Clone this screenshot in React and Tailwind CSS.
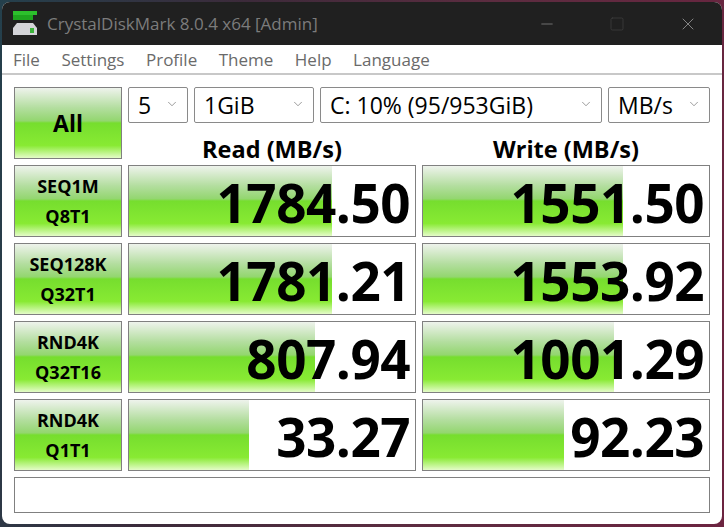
import { Minus, Square, X, ChevronDown } from 'lucide-react';

const rows = [
  { top: 'SEQ1M', bottom: 'Q8T1', read: '1784.50', readBar: 203, write: '1551.50', writeBar: 200 },
  { top: 'SEQ128K', bottom: 'Q32T1', read: '1781.21', readBar: 203, write: '1553.92', writeBar: 200 },
  { top: 'RND4K', bottom: 'Q32T16', read: '807.94', readBar: 186, write: '1001.29', writeBar: 191 },
  { top: 'RND4K', bottom: 'Q1T1', read: '33.27', readBar: 120, write: '92.23', writeBar: 141 },
];

const barGradient = 'bg-[linear-gradient(180deg,#eef3ec_0%,#b4dea0_28%,#93d66f_47%,#76de2e_50%,#88ea33_82%,#e4fcc8_100%)]';
const menus = ['File', 'Settings', 'Profile', 'Theme', 'Help', 'Language'];

function Combo({ label, className }) {
  return (
    <div className={`h-9 flex items-center justify-between pl-[9px] pr-[8px] bg-white border border-[#8a8a8a] rounded-[2px] text-[23px] text-black ${className}`}>
      <span>{label}</span>
      <ChevronDown size={14} strokeWidth={1} className="text-[#555] -mt-[2px]" />
    </div>
  );
}

function Score({ value, bar }) {
  return (
    <div className="relative flex-1 h-full bg-white border border-[#808080] overflow-hidden">
      <div className={`absolute left-0 top-0 bottom-0 ${barGradient}`} style={{ width: bar }} />
      <div className="relative h-full flex items-center justify-end pr-[5px] pt-[3px] text-[53px] leading-[60px] font-bold text-black tracking-[-0.5px]">{value}</div>
    </div>
  );
}

function TestButton({ top, bottom }) {
  return (
    <div className={`w-[108px] h-full shrink-0 flex flex-col items-center justify-center gap-[6px] border border-[#808080] text-[18px] leading-6 font-bold text-black ${barGradient}`}>
      <span>{top}</span>
      <span>{bottom}</span>
    </div>
  );
}

export default function App() {
  return (
    <div className="w-[724px] h-[527px] p-[2px] pb-[3px] overflow-hidden bg-[linear-gradient(100deg,#24404c_0%,#3c2a3a_30%,#5c2c40_60%,#6c2440_100%)] font-['Open_Sans','Noto_Sans',sans-serif]">
      <div className="h-full flex flex-col rounded-[8px] overflow-hidden bg-white">
        {/* title bar */}
        <div className="h-[43px] shrink-0 flex items-center bg-[#202020] text-[#7c7c7c]">
          <svg width="24" height="24" viewBox="0 0 24 24" className="ml-[11px] mr-[10px] -mt-[1px]">
            <rect x="0" y="0" width="24" height="4" fill="#2cc02c" />
            <rect x="0" y="4" width="20" height="5" fill="#1ea51e" />
            <path d="M4 12h16l4 5v7H0v-7z" fill="#d4d4d8" />
            <rect x="17" y="17" width="4" height="5" fill="#3cb43c" />
          </svg>
          <span className="text-[17px]">CrystalDiskMark 8.0.4 x64 [Admin]</span>
          <div className="ml-auto flex items-center gap-[53px] pr-[24px]">
            <Minus size={18} strokeWidth={1} className="text-[#8a8a8a]" />
            <Square size={16} strokeWidth={1} className="text-[#444]" />
            <X size={20} strokeWidth={1} className="text-[#9a9a9a]" />
          </div>
        </div>
        {/* menu */}
        <div className="h-[30px] shrink-0 flex items-center gap-[21.5px] pl-[11px] pt-[2px] text-[17px] text-[#6a6a6a] border-b-2 border-[#c8c8c8]">
          {menus.map((m) => <span key={m}>{m}</span>)}
        </div>
        {/* body */}
        <div className="flex-1 flex flex-col gap-[6px] px-[12px] pt-[12px]">
          <div className="h-[78px] -mb-[6px] flex gap-[6px]">
            <div className={`w-[108px] h-[72px] shrink-0 flex items-center justify-center border border-[#808080] text-[23px] font-bold text-black ${barGradient}`}>All</div>
            <div className="flex-1 flex flex-col">
              <div className="flex gap-[6px]">
                <Combo label="5" className="w-[60px]" />
                <Combo label="1GiB" className="w-[120px]" />
                <Combo label="C: 10% (95/953GiB)" className="w-[282px]" />
                <Combo label="MB/s" className="w-[102px]" />
              </div>
              <div className="flex gap-[6px] flex-1 items-center pt-[9px] text-[23.5px] font-bold text-black">
                <div className="w-[288px] text-center">Read (MB/s)</div>
                <div className="w-[288px] text-center">Write (MB/s)</div>
              </div>
            </div>
          </div>
          {rows.map((r) => (
            <div key={r.top + r.bottom} className="h-[72px] flex gap-[6px]">
              <TestButton top={r.top} bottom={r.bottom} />
              <Score value={r.read} bar={r.readBar} />
              <Score value={r.write} bar={r.writeBar} />
            </div>
          ))}
          <div className="h-9 border border-[#808080] bg-white" />
        </div>
      </div>
    </div>
  );
}
